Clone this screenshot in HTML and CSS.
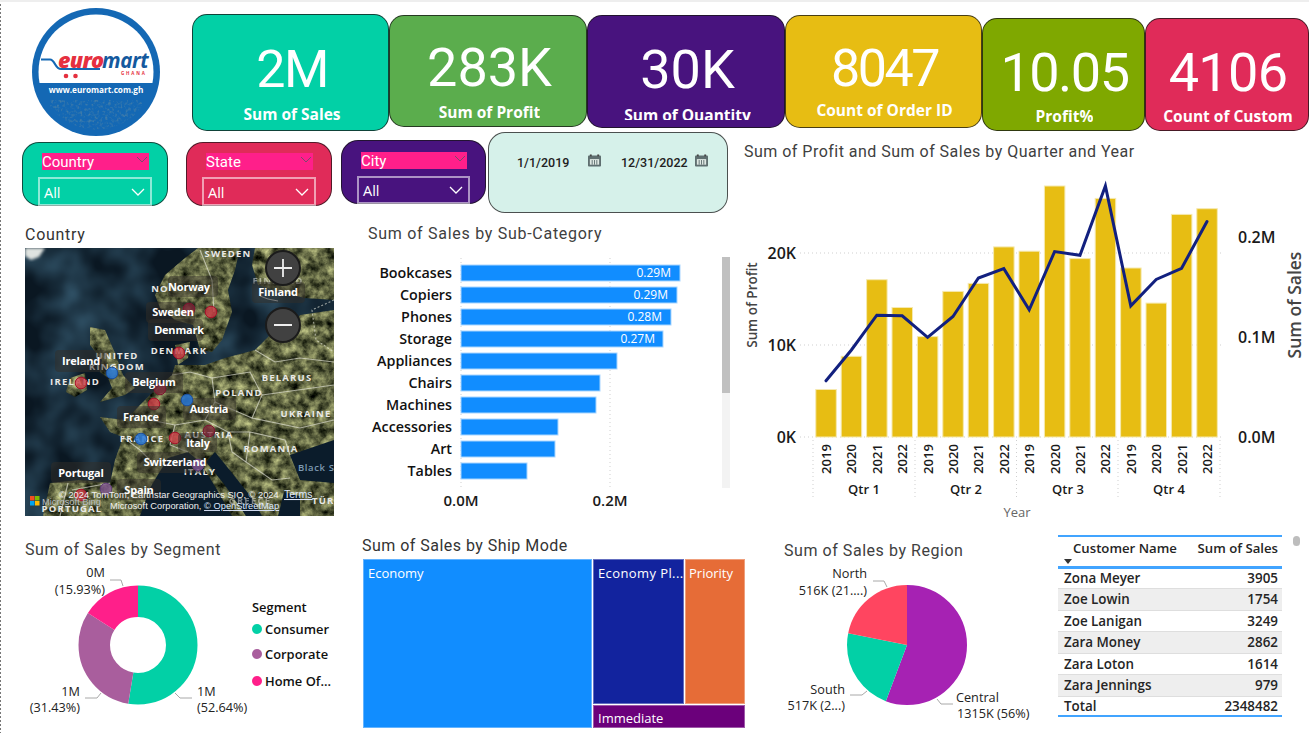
FILE: index.html
```html
<!DOCTYPE html>
<html lang="en">
<head>
<meta charset="utf-8">
<title>Euromart Sales Dashboard</title>
<link rel="stylesheet" href="styles.css">
</head>
<body>
<div class="page">

  <header class="top">
    <svg class="logo" viewBox="32 8 128 128" aria-label="Euromart logo">
      <defs>
        <clipPath id="logoClip"><circle cx="96" cy="72" r="57.5"/></clipPath>
        <filter id="logoGrain" x="0" y="0" width="100%" height="100%">
          <feTurbulence type="fractalNoise" baseFrequency="0.35" numOctaves="2" seed="4"/>
          <feColorMatrix values="0 0 0 0 0.05  0 0 0 0 0.2  0 0 0 0 0.4  0 0 0 3.2 -1.55"/>
        </filter>
      </defs>
      <circle cx="96" cy="72" r="64" fill="#1468B4"/>
      <g clip-path="url(#logoClip)">
        <rect x="32" y="8" width="128" height="75" fill="#fff"/>
        <rect x="50" y="100" width="92" height="36" filter="url(#logoGrain)"/>
      </g>
      <path d="M41 59.500 H50 C55 59.500 55 69 61 69 H100" fill="none" stroke="#1468B4" stroke-width="2.200"/>
      <circle cx="66" cy="76" r="2.300" fill="#E5303F"/>
      <circle cx="75.500" cy="76" r="2.300" fill="#E5303F"/>
      <text class="logo-euro" x="58" y="67.500">euro</text>
      <text class="logo-mart" x="102" y="67.500">mart</text>
      <text class="logo-ghana" x="121" y="74.500">GHANA</text>
      <text class="logo-url" x="96" y="93">www.euromart.com.gh</text>
    </svg>

    <div class="kpis">
      <div class="kpi kpi-sales"><div class="kpi-value">2M</div><div class="kpi-label">Sum of Sales</div></div>
      <div class="kpi kpi-profit"><div class="kpi-value">283K</div><div class="kpi-label">Sum of Profit</div></div>
      <div class="kpi kpi-qty"><div class="kpi-value">30K</div><div class="kpi-label">Sum of Quantity</div></div>
      <div class="kpi kpi-order"><div class="kpi-value">8047</div><div class="kpi-label">Count of Order ID</div></div>
      <div class="kpi kpi-pct"><div class="kpi-value">10.05</div><div class="kpi-label">Profit%</div></div>
      <div class="kpi kpi-cust"><div class="kpi-value">4106</div><div class="kpi-label">Count of Custom</div></div>
    </div>
  </header>

  <section class="mid">
    <div class="mid-left">
      <div class="filters">
        <div class="slicer slicer-country">
          <div class="slicer-head"><span>Country</span><svg class="chev-head" viewBox="0 0 12 7"><path d="M1 1l5 5 5-5"/></svg></div>
          <div class="slicer-box"><span>All</span><svg class="chev" viewBox="0 0 14 8"><path d="M1 1l6 6 6-6"/></svg></div>
        </div>
        <div class="slicer slicer-state">
          <div class="slicer-head"><span>State</span><svg class="chev-head" viewBox="0 0 12 7"><path d="M1 1l5 5 5-5"/></svg></div>
          <div class="slicer-box"><span>All</span><svg class="chev" viewBox="0 0 14 8"><path d="M1 1l6 6 6-6"/></svg></div>
        </div>
        <div class="slicer slicer-city">
          <div class="slicer-head"><span>City</span><svg class="chev-head" viewBox="0 0 12 7"><path d="M1 1l5 5 5-5"/></svg></div>
          <div class="slicer-box"><span>All</span><svg class="chev" viewBox="0 0 14 8"><path d="M1 1l6 6 6-6"/></svg></div>
        </div>
        <div class="dates">
          <div class="date date-a"><span>1/1/2019</span>
            <svg class="cal" viewBox="0 0 14 13"><rect y="1" width="14" height="12" rx="1" fill="#5f6f70"/><rect x="2" y="0" width="2" height="2" fill="#444"/><rect x="10" y="0" width="2" height="2" fill="#444"/><path d="M2 5h10v6H2z" fill="#dfe8e3"/><path d="M4.500 6v5M7 6v5M9.500 6v5" stroke="#5f6f70"/></svg>
          </div>
          <div class="date date-b"><span>12/31/2022</span>
            <svg class="cal" viewBox="0 0 14 13"><rect y="1" width="14" height="12" rx="1" fill="#5f6f70"/><rect x="2" y="0" width="2" height="2" fill="#444"/><rect x="10" y="0" width="2" height="2" fill="#444"/><path d="M2 5h10v6H2z" fill="#dfe8e3"/><path d="M4.500 6v5M7 6v5M9.500 6v5" stroke="#5f6f70"/></svg>
          </div>
        </div>
      </div>

      <div class="viz-row">
        <div class="map-panel">
          <h2 class="title title-map">Country</h2>
          <svg class="map" viewBox="25 248 309 268">
            <defs>
              <filter id="sat" x="0" y="0" width="100%" height="100%" color-interpolation-filters="sRGB">
                <feTurbulence type="fractalNoise" baseFrequency="0.11" numOctaves="4" seed="7" result="n"/>
                <feColorMatrix in="n" values="1.050 0 0 0 -0.150  1.050 0 0 0 -0.130  0.750 0 0 0 -0.120  0 0 0 0 1" result="c"/>
                <feComposite in="c" in2="SourceAlpha" operator="in"/>
              </filter>
              <filter id="seaNoise" x="0" y="0" width="100%" height="100%">
                <feTurbulence type="fractalNoise" baseFrequency="0.02" numOctaves="3" seed="3"/>
                <feColorMatrix values="0 0 0 0 0.05  0 0 0 0 0.14  0 0 0 0 0.22  0 0 0 1.4 -0.45"/>
              </filter>
              <filter id="soft"><feGaussianBlur stdDeviation="1.500"/></filter>
            </defs>
            <rect x="25" y="248" width="309" height="268" fill="#0a1722"/>
            <rect x="25" y="248" width="309" height="268" filter="url(#seaNoise)"/>
            <path d="M25 248h20l-6 9-8 3-6-4z" fill="#dfe3e0" filter="url(#soft)"/>
            <g filter="url(#sat)">
              <path d="M198 248H240L235 270 228 290 232 312 222 340 212 352 200 350 193 325 175 320 160 308 155 295 165 275 185 258Z"/>
              <path d="M175 345L190 342 188 358 178 365Z"/>
              <path d="M255 248H334V300L305 298 280 292 258 285 252 265Z"/>
              <path d="M90 327L105 330 115 353 123 375 135 388 125 395 100 402 112 388 108 378 100 372 102 360 90 345Z"/>
              <path d="M70 378L85 373 87 390 75 397 66 392Z"/>
              <path d="M334 310L300 315 290 330 270 335 255 350 225 358 205 365 190 365 175 365 172 375 157 388 140 405 125 420 100 417 110 432 123 437 115 460 110 483 80 480 50 483 43 516H334Z"/>
            </g>
            <g fill="#0b1c2b">
              <path d="M140 516L150 488 168 458 188 452 200 462 216 488 232 516Z"/>
              <path d="M215 452L228 468 252 498 262 516H246L224 484 206 462Z"/>
              <path d="M284 492L300 496 300 516H278Z"/>
              <path d="M290 455L334 440V483L300 480Z"/>
            </g>
            <g class="map-border">
              <path d="M200 250L212 280 214 312"/>
              <path d="M172 375L190 372 212 378 215 402 205 420 175 425 150 420"/>
              <path d="M212 378L250 372 262 395 252 418 215 402"/>
              <path d="M262 395L334 385"/>
              <path d="M252 418L300 428 334 420"/>
              <path d="M205 420L228 432 250 432 285 440 290 455"/>
              <path d="M250 432L246 462 272 480 290 478"/>
              <path d="M228 432L232 452 246 462"/>
              <path d="M175 425L170 445 188 452"/>
              <path d="M123 437L140 450 150 460"/>
              <path d="M68 483L60 516"/>
              <path d="M110 483L72 490"/>
              <path d="M334 300L312 310 316 340 334 352" stroke-dasharray="2 2"/>
              <path d="M255 350L275 362 300 358 334 362"/>
            </g>
            <path d="M260 296l8 3 10 2" stroke="#fff" fill="none" opacity=".7"/>

            <g class="map-base">
              <text x="228" y="257">SWEDEN</text>
              <text x="278" y="284" class="map-faint">FINLAND</text>
              <text x="160" y="292">NO</text>
              <text x="117" y="359">UNITED</text>
              <text x="117" y="370">KINGDOM</text>
              <text x="179" y="354">DENMARK</text>
              <text x="75" y="385">IRELAND</text>
              <text x="287" y="381">BELARUS</text>
              <text x="239" y="396">POLAND</text>
              <text x="306" y="417">UKRAINE</text>
              <text x="209" y="438">AUSTRIA</text>
              <text x="271" y="452">ROMANIA</text>
              <text x="142" y="442">FRANCE</text>
              <text x="200" y="475">ITALY</text>
              <text x="72" y="512">PORTUGAL</text>
              <text x="250" y="504" class="map-faint">GREECE</text>
              <text x="336" y="504">TÜRKIYE</text>
              <text x="298" y="471" class="map-sea">Black Sea</text>
            </g>

            <g class="bub-red">
              <circle cx="211" cy="312" r="5.800"/><circle cx="179" cy="353" r="5.800"/><circle cx="81" cy="383" r="5.800"/>
              <circle cx="154" cy="404" r="5.800"/><circle cx="175" cy="438" r="5.800"/><circle cx="81" cy="495" r="5.800"/>
            </g>
            <g class="map-chip">
              <rect x="168" y="276" width="50" height="21" rx="4"/><rect x="146" y="302" width="49" height="21" rx="4"/>
              <rect x="148" y="319" width="55" height="22" rx="4"/><rect x="55" y="350" width="52" height="22" rx="4"/>
              <rect x="125" y="372" width="58" height="21" rx="4"/><rect x="183" y="398" width="53" height="22" rx="4"/>
              <rect x="117" y="406" width="49" height="22" rx="4"/><rect x="178" y="433" width="39" height="19" rx="4"/>
              <rect x="137" y="452" width="68" height="21" rx="4"/><rect x="51" y="462" width="60" height="21" rx="4"/>
              <rect x="117" y="479" width="44" height="21" rx="4"/><rect x="252" y="282" width="53" height="21" rx="4"/>
            </g>
            <g class="bub-dark">
              <circle cx="189" cy="309" r="5.800"/><circle cx="160" cy="389" r="5.800"/><circle cx="209" cy="431" r="5.800"/>
            </g>
            <g class="bub-blue">
              <circle cx="112" cy="373" r="5.800"/><circle cx="187" cy="400" r="5.800"/><circle cx="141" cy="439" r="5.800"/>
            </g>
            <g class="bub-purple">
              <circle cx="198" cy="465" r="5.800"/><circle cx="106" cy="489" r="5.800"/>
            </g>
            <g class="map-name">
              <text x="189" y="291">Norway</text><text x="173" y="316">Sweden</text><text x="179" y="334">Denmark</text>
              <text x="81" y="365">Ireland</text><text x="154" y="386">Belgium</text><text x="209" y="413">Austria</text>
              <text x="141" y="421">France</text><text x="198" y="447">Italy</text><text x="175" y="466">Switzerland</text>
              <text x="81" y="477">Portugal</text><text x="139" y="494">Spain</text><text x="278" y="296">Finland</text>
            </g>

            <g class="zoom-btn">
              <circle cx="283" cy="268" r="17"/><circle cx="283" cy="325" r="17"/>
              <path d="M274 268h18M283 259v18M274 325h18"/>
            </g>

            <rect x="30" y="496" width="4.500" height="4.500" fill="#F25022"/><rect x="35" y="496" width="4.500" height="4.500" fill="#7FBA00"/>
            <rect x="30" y="501" width="4.500" height="4.500" fill="#00A4EF"/><rect x="35" y="501" width="4.500" height="4.500" fill="#FFB900"/>
            <text class="map-attr map-bing" x="42" y="505">Microsoft Bing</text>
            <text class="map-attr" x="59" y="498">© 2024 TomTom, Earthstar Geographics SIO, © 2024</text>
            <text class="map-attr map-link map-terms" x="284" y="498">Terms</text>
            <text class="map-attr" x="110" y="509">Microsoft Corporation, <tspan class="map-link">© OpenStreetMap</tspan></text>
          </svg>
        </div>

        <div class="bars-panel">
          <h2 class="title title-bars">Sum of Sales by Sub-Category</h2>
          <svg class="bars" viewBox="360 248 375 268">
            <path class="grid" d="M461 258V490M610 258V490"/>
            <g class="bar">
              <rect x="461" y="265" width="219" height="16"/><rect x="461" y="287" width="216" height="16"/>
              <rect x="461" y="309" width="210" height="16"/><rect x="461" y="331" width="202" height="16"/>
              <rect x="461" y="353" width="156" height="16"/><rect x="461" y="375" width="139" height="16"/>
              <rect x="461" y="397" width="135" height="16"/><rect x="461" y="419" width="97" height="16"/>
              <rect x="461" y="441" width="94" height="16"/><rect x="461" y="463" width="66" height="16"/>
            </g>
            <g class="bar-name">
              <text x="452" y="278">Bookcases</text><text x="452" y="300">Copiers</text><text x="452" y="322">Phones</text>
              <text x="452" y="344">Storage</text><text x="452" y="366">Appliances</text><text x="452" y="388">Chairs</text>
              <text x="452" y="410">Machines</text><text x="452" y="432">Accessories</text><text x="452" y="454">Art</text>
              <text x="452" y="476">Tables</text>
            </g>
            <g class="bar-val">
              <text x="671" y="277">0.29M</text><text x="668" y="299">0.29M</text><text x="662" y="321">0.28M</text><text x="655" y="343">0.27M</text>
            </g>
            <g class="bar-axis"><text x="461" y="506">0.0M</text><text x="610" y="506">0.2M</text></g>
            <rect x="722" y="257" width="8" height="136" fill="#c0c0c0"/>
            <rect x="722" y="393" width="8" height="95" fill="#f3f3f3"/>
          </svg>
        </div>
      </div>
    </div>

    <div class="combo-panel">
      <h2 class="title title-combo">Sum of Profit and Sum of Sales by Quarter and Year</h2>
      <svg class="combo" viewBox="744 168 565 364">
        <path class="grid" d="M800 253H1222M800 345H1222M800 437H1222M813 440V500M915 440V500M1016.500 440V500M1118 440V500M1220 440V500"/>
        <g class="cbar">
          <rect x="815.800" y="389.500" width="20.500" height="47.500"/><rect x="841.200" y="356.300" width="20.500" height="80.700"/>
          <rect x="866.600" y="279.700" width="20.500" height="157.300"/><rect x="892" y="307.500" width="20.500" height="129.500"/>
          <rect x="917.400" y="336.600" width="20.500" height="100.400"/><rect x="942.800" y="291.400" width="20.500" height="145.600"/>
          <rect x="968.200" y="283.400" width="20.500" height="153.600"/><rect x="993.600" y="246.900" width="20.500" height="190.100"/>
          <rect x="1019" y="251.200" width="20.500" height="185.800"/><rect x="1044.400" y="186" width="20.500" height="251"/>
          <rect x="1069.800" y="258.600" width="20.500" height="178.400"/><rect x="1095.200" y="198.400" width="20.500" height="238.600"/>
          <rect x="1120.600" y="268" width="20.500" height="169"/><rect x="1146" y="303.100" width="20.500" height="133.900"/>
          <rect x="1171.400" y="214.400" width="20.500" height="222.600"/><rect x="1196.800" y="208.700" width="20.500" height="228.300"/>
        </g>
        <polyline class="cline" points="826,380.800 851.400,350 876.800,315.200 902.200,315.800 927.600,337.300 953,316.500 978.400,278 1003.800,268.600 1029.200,309.800 1054.600,251.600 1080,255.300 1105.400,186 1130.800,305.800 1156.200,279.400 1181.600,268.300 1207,221.500"/>
        <g class="ax-bold ax-end"><text x="796" y="259">20K</text><text x="796" y="351">10K</text><text x="796" y="443">0K</text></g>
        <g class="ax-bold"><text x="1238" y="243">0.2M</text><text x="1238" y="343">0.1M</text><text x="1238" y="443">0.0M</text></g>
        <text class="ax-title-left" transform="rotate(-90 757 305)" x="757" y="305">Sum of Profit</text>
        <text class="ax-title-right" transform="rotate(-90 1301 305)" x="1301" y="305">Sum of Sales</text>
        <g class="year">
          <text transform="rotate(-90 831 459)" x="831" y="459">2019</text><text transform="rotate(-90 856.400 459)" x="856.400" y="459">2020</text>
          <text transform="rotate(-90 881.800 459)" x="881.800" y="459">2021</text><text transform="rotate(-90 907.200 459)" x="907.200" y="459">2022</text>
          <text transform="rotate(-90 932.600 459)" x="932.600" y="459">2019</text><text transform="rotate(-90 958 459)" x="958" y="459">2020</text>
          <text transform="rotate(-90 983.400 459)" x="983.400" y="459">2021</text><text transform="rotate(-90 1008.800 459)" x="1008.800" y="459">2022</text>
          <text transform="rotate(-90 1034.200 459)" x="1034.200" y="459">2019</text><text transform="rotate(-90 1059.600 459)" x="1059.600" y="459">2020</text>
          <text transform="rotate(-90 1085 459)" x="1085" y="459">2021</text><text transform="rotate(-90 1110.400 459)" x="1110.400" y="459">2022</text>
          <text transform="rotate(-90 1135.800 459)" x="1135.800" y="459">2019</text><text transform="rotate(-90 1161.200 459)" x="1161.200" y="459">2020</text>
          <text transform="rotate(-90 1186.600 459)" x="1186.600" y="459">2021</text><text transform="rotate(-90 1212 459)" x="1212" y="459">2022</text>
        </g>
        <g class="qtr"><text x="864" y="494">Qtr 1</text><text x="966" y="494">Qtr 2</text><text x="1068" y="494">Qtr 3</text><text x="1169" y="494">Qtr 4</text></g>
        <text class="ax-year" x="1017" y="517">Year</text>
      </svg>
    </div>
  </section>

  <section class="bottom">
    <div class="seg-panel">
      <h2 class="title title-seg">Sum of Sales by Segment</h2>
      <svg class="seg" viewBox="20 560 325 170">
        <g class="donut" transform="rotate(-90 138 645)">
          <circle class="d-teal" cx="138" cy="645" r="43.750" pathLength="100" stroke-dasharray="52.640 100"/>
          <circle class="d-purple" cx="138" cy="645" r="43.750" pathLength="100" stroke-dasharray="31.430 100" stroke-dashoffset="-52.640"/>
          <circle class="d-pink" cx="138" cy="645" r="43.750" pathLength="100" stroke-dasharray="15.930 100" stroke-dashoffset="-84.070"/>
        </g>
        <path class="leader" d="M110 580H121L123 586M85 698H97L101 693M175 693L180 698H192"/>
        <g class="pie-label">
          <text class="t-end" x="105" y="577">0M</text><text class="t-end" x="105" y="594">(15.93%)</text>
          <text class="t-end" x="80" y="696">1M</text><text class="t-end" x="80" y="712">(31.43%)</text>
          <text x="197" y="696">1M</text><text x="197" y="712">(52.64%)</text>
        </g>
        <g class="legend">
          <text class="legend-title" x="252" y="612">Segment</text>
          <circle cx="257" cy="629" r="5" fill="#02D0A6"/><text x="265" y="634">Consumer</text>
          <circle cx="257" cy="654" r="5" fill="#A95E9D"/><text x="265" y="659">Corporate</text>
          <circle cx="257" cy="681" r="5" fill="#FF1F8A"/><text x="265" y="686">Home Of...</text>
        </g>
      </svg>
    </div>

    <div class="ship-panel">
      <h2 class="title title-ship">Sum of Sales by Ship Mode</h2>
      <div class="treemap">
        <div class="tm tm-eco">Economy</div>
        <div class="tm-side">
          <div class="tm-top">
            <div class="tm tm-plus">Economy Pl...</div>
            <div class="tm tm-pri">Priority</div>
          </div>
          <div class="tm tm-imm">Immediate</div>
        </div>
      </div>
    </div>

    <div class="reg-panel">
      <h2 class="title title-reg">Sum of Sales by Region</h2>
      <svg class="reg" viewBox="780 560 255 170">
        <g class="pie" transform="rotate(-90 907 645)">
          <circle class="p-central" cx="907" cy="645" r="30" pathLength="100" stroke-dasharray="55.750 100"/>
          <circle class="p-south" cx="907" cy="645" r="30" pathLength="100" stroke-dasharray="22.420 100" stroke-dashoffset="-55.750"/>
          <circle class="p-north" cx="907" cy="645" r="30" pathLength="100" stroke-dasharray="21.830 100" stroke-dashoffset="-78.170"/>
        </g>
        <path class="leader" d="M873 581H884L887 587M850 695H862L867 691M937 699L941 704H953"/>
        <g class="pie-label">
          <text class="t-end" x="867" y="578">North</text><text class="t-end" x="867" y="595">516K (21....)</text>
          <text class="t-end" x="845" y="694">South</text><text class="t-end" x="845" y="710">517K (2...)</text>
          <text x="956" y="702">Central</text><text x="957" y="718">1315K (56%)</text>
        </g>
      </svg>
    </div>

    <div class="table-panel">
      <table class="tbl">
        <thead>
          <tr><th class="th-name">Customer Name<span class="sort"></span></th><th class="num">Sum of Sales</th></tr>
        </thead>
        <tbody>
          <tr><td>Zona Meyer</td><td class="num">3905</td></tr>
          <tr class="alt"><td>Zoe Lowin</td><td class="num">1754</td></tr>
          <tr><td>Zoe Lanigan</td><td class="num">3249</td></tr>
          <tr class="alt"><td>Zara Money</td><td class="num">2862</td></tr>
          <tr><td>Zara Loton</td><td class="num">1614</td></tr>
          <tr class="alt"><td>Zara Jennings</td><td class="num">979</td></tr>
        </tbody>
        <tfoot>
          <tr><td>Total</td><td class="num">2348482</td></tr>
        </tfoot>
      </table>
      <div class="scroll-dot"></div>
    </div>
  </section>
</div>
</body>
</html>
```
FILE: styles.css
```css
* { box-sizing: border-box; }
html, body { margin: 0; padding: 0; background: #fff; }
svg { display: block; }
.page {
  width: 1309px; height: 733px; overflow: hidden;
  font-family: "Open Sans", "Noto Sans", sans-serif;
  background:
    linear-gradient(#eeeeee, #eeeeee) top left / 100% 2px no-repeat,
    repeating-linear-gradient(to bottom, #777 0 2px, transparent 2px 4px) top left / 1px 100% no-repeat,
    #fff;
}

/* top band */
.top { display: flex; height: 132px; padding-left: 32px; }
.logo { width: 128px; height: 128px; margin-top: 8px; flex: none; }
.logo-euro { font: italic 800 21.500px "Open Sans", sans-serif; fill: #E5303F; letter-spacing: -.7px; }
.logo-mart { font: italic 700 20.500px "Open Sans", sans-serif; fill: #14599E; letter-spacing: -.4px; }
.logo-ghana { font: 700 4.500px "Open Sans", sans-serif; fill: #E5303F; letter-spacing: 1.800px; }
.logo-url { font: 700 8.200px "Open Sans", sans-serif; fill: #fff; text-anchor: middle; }

.kpis { display: flex; margin-left: 32px; align-items: flex-start; }
.kpi {
  display: flex; flex-direction: column; align-items: center; flex: none;
  border: 1px solid rgba(20, 20, 20, .75); border-radius: 15px; color: #fff;
  margin-top: var(--top); width: var(--w); height: var(--h); background: var(--bg);
  padding-left: var(--pl, 3px);
}
.kpi-value {
  font: 400 var(--fs, 54px)/60px Roboto, sans-serif; height: 60px; margin-top: var(--vt);
  letter-spacing: var(--ls, 0);
  white-space: nowrap;
}
.kpi-label {
  font: 700 15.500px/20px "Open Sans", sans-serif; margin-top: var(--lt); height: var(--lh, 20px);
  overflow: hidden; white-space: nowrap;
}
.kpi-sales  { --top: 14px; --w: 197px; --h: 117px; --bg: #02D0A6; --vt: 25px; --lt: 4px; --fs: 52px; --ls: -1.500px; }
.kpi-profit { --top: 15px; --w: 198px; --h: 112px; --bg: #5BAD4D; --vt: 22px; --lt: 4px; --lh: 16px; }
.kpi-qty    { --top: 15px; --w: 198px; --h: 113px; --bg: #48137E; --vt: 24px; --lt: 5px; --lh: 15px; --fs: 54px; }
.kpi-order  { --top: 15px; --w: 197px; --h: 113px; --bg: #E7BD13; --vt: 23px; --lt: 1px; --fs: 52px; --ls: -2.500px; --pl: 2px; }
.kpi-pct    { --top: 18px; --w: 163px; --h: 113px; --bg: #7FA800; --vt: 24px; --lt: 3px; --fs: 54px; --ls: -1.500px; --pl: 2px; }
.kpi-cust   { --top: 18px; --w: 164px; --h: 113px; --bg: #E02B59; --vt: 24px; --lt: 3px; --ls: -.700px; --pl: 2px; }

/* middle */
.mid { display: flex; height: 400px; }
.mid-left { width: 744px; flex: none; }
.filters { display: flex; height: 91px; padding-left: 22px; align-items: flex-start; }
.slicer {
  width: 146px; height: 64px; margin-top: 10px; margin-right: 18px; flex: none;
  border: 1px solid rgba(20, 20, 20, .7); border-radius: 17px;
  padding: 10px 15px 0 15px; color: #fff;
  display: flex; flex-direction: column; align-items: stretch;
}
.slicer-country { background: #02D0A6; }
.slicer-state { background: #E02B59; margin-right: 9px; }
.slicer-city { background: #48137E; margin-top: 8px; margin-right: 2px; width: 145px; padding-top: 11px; }
.slicer-head {
  height: 17px; margin: 0 3px 0 4px; background: #FF1F8A; display: flex;
  justify-content: space-between; align-items: center;
  font: 400 15px/19px Roboto, sans-serif; padding-right: 1px;
}
.slicer-head span { padding-top: 2px; }
.chev-head { width: 12px; height: 7px; fill: none; stroke: #7a4a6c; stroke-width: 1; margin-top: -4px; }
.slicer-box {
  height: 29px; margin-top: 7px; border: 2px solid rgba(255, 255, 255, .55);
  display: flex; justify-content: space-between; align-items: center;
  padding: 0 5px 0 4px; font: 400 14.500px/29px "Open Sans", sans-serif;
}
.slicer-box span { padding-top: 1px; }
.slicer-city .slicer-box { height: 28px; }
.chev { width: 14px; height: 8px; fill: none; stroke: #fff; stroke-width: 1.300; }

.dates {
  width: 240px; height: 81px; flex: none; background: #D6F1EA;
  border: 1px solid rgba(40, 40, 40, .8); border-radius: 17px;
  padding: 16px 0 0 28px; display: flex;
}
.date { display: flex; align-items: flex-start; height: 28px; font: 500 12.500px/28px Roboto, sans-serif; color: #222; }
.date-a { width: 104px; justify-content: space-between; padding-right: 20px; }
.date-b { width: 87px; justify-content: space-between; }
.cal { width: 13px; height: 13px; margin-top: 5px; flex: none; }

.title { margin: 0; font: 400 16px/20px Roboto, sans-serif; letter-spacing: .72px; color: #404040; white-space: nowrap; }
.viz-row { display: flex; }
.map-panel { margin-left: 25px; width: 309px; flex: none; }
.title-map { height: 25px; padding-top: 2px; color: #333; }
.map { width: 309px; height: 268px; }
.map-border path { fill: none; stroke: rgba(235, 235, 225, .62); stroke-width: 1.100; }
.map-base text { font: 700 9.500px "Open Sans", sans-serif; fill: #e9e9e6; letter-spacing: 1.200px; text-anchor: middle; }
.map-base .map-faint { opacity: .5; }
.map-base .map-sea { fill: #7d9ab2; font-weight: 600; letter-spacing: .6px; text-anchor: start; }
.map-chip rect { fill: rgba(50, 45, 40, .5); }
.map-name text { font: 700 11px "Open Sans", sans-serif; fill: #fff; text-anchor: middle; letter-spacing: -.2px; }
.bub-red circle { fill: rgba(205, 60, 70, .8); stroke: #a8122a; stroke-width: 1; }
.bub-dark circle { fill: rgba(135, 40, 60, .7); stroke: #7d1530; stroke-width: 1; }
.bub-blue circle { fill: rgba(40, 120, 215, .85); stroke: #1c4f9f; stroke-width: 1; }
.bub-purple circle { fill: rgba(135, 90, 155, .75); stroke: #5f3d77; stroke-width: 1; }
.zoom-btn circle { fill: #414141; stroke: #1b1b1b; stroke-width: 2; }
.zoom-btn path { stroke: #eee; stroke-width: 1.800; fill: none; }
.map-attr { font: 400 9.300px "Liberation Sans", sans-serif; fill: #f0f0f0; }
.map-bing { fill: #b8bcc0; }
.map-link { fill: #dfe8ff; text-decoration: underline; }
.map-terms { font-size: 10.500px; }

.bars-panel { margin-left: 26px; width: 375px; flex: none; }
.title-bars { height: 25px; padding: 1px 0 0 8px; }
.bars { width: 375px; height: 268px; }
.grid { stroke: #cfcfcf; stroke-width: 1; stroke-dasharray: 1 3; fill: none; }
.bar rect { fill: #118DFF; stroke: #a9d6ff; stroke-width: 1; }
.bar-name text { font: 600 14.300px "Open Sans", sans-serif; fill: #111; text-anchor: end; }
.bar-val text { font: 400 12px "Open Sans", sans-serif; fill: #fff; text-anchor: end; }
.bar-axis text { font: 600 15px "Open Sans", sans-serif; fill: #1a1a1a; text-anchor: middle; }

.combo-panel { width: 565px; flex: none; }
.title-combo { height: 36px; padding-top: 10px; letter-spacing: .48px; }
.combo { width: 565px; height: 364px; }
.cbar rect { fill: #E7BD13; stroke: #f6e9ae; stroke-width: 1; }
.cline { fill: none; stroke: #12207F; stroke-width: 3; stroke-linejoin: miter; stroke-linecap: round; }
.ax-bold text { font: 600 16px "Open Sans", sans-serif; fill: #1a1a1a; }
.ax-end text { text-anchor: end; }
.ax-title-left { font: 600 13.500px "Open Sans", sans-serif; fill: #444; text-anchor: middle; }
.ax-title-right { font: 600 17.500px "Open Sans", sans-serif; fill: #444; text-anchor: middle; }
.year text { font: 600 13px "Open Sans", sans-serif; fill: #1a1a1a; text-anchor: middle; }
.qtr text { font: 600 13px "Open Sans", sans-serif; fill: #1a1a1a; text-anchor: middle; }
.ax-year { font: 400 13px "Open Sans", sans-serif; fill: #666; text-anchor: middle; }

/* bottom */
.bottom { display: flex; height: 201px; }
.seg-panel { width: 345px; flex: none; padding-left: 20px; }
.title-seg { height: 28px; padding: 8px 0 0 5px; letter-spacing: .62px; }
.seg { width: 325px; height: 170px; }
.donut circle, .pie circle { fill: none; }
.donut circle { stroke-width: 31.500; }
.pie circle { stroke-width: 60; }
.d-teal { stroke: #02D0A6; } .d-purple { stroke: #A95E9D; } .d-pink { stroke: #FF1F8A; }
.p-central { stroke: #A622B3; } .p-south { stroke: #02D0A6; } .p-north { stroke: #FF4560; }
.leader { fill: none; stroke: #a8a8a8; stroke-width: 1; }
.pie-label text { font: 500 12.700px "Open Sans", sans-serif; fill: #222; }
.pie-label .t-end { text-anchor: end; }
.legend text { font: 600 12.900px "Open Sans", sans-serif; fill: #111; }

.ship-panel { width: 435px; flex: none; padding-left: 18px; padding-top: 4px; }
.title-ship { height: 23px; margin-left: -1px; color: #333; letter-spacing: .47px; }
.treemap { width: 382px; height: 169px; display: flex; gap: 1px; color: #fff; font: 400 13px/18px "Open Sans", sans-serif; }
.tm { padding: 4px 4px; overflow: hidden; white-space: nowrap; border: 1px solid rgba(255, 255, 255, .35); }
.tm-eco { width: 229px; background: #118DFF; }
.tm-side { flex: 1; display: flex; flex-direction: column; gap: 1px; }
.tm-top { flex: 1; display: flex; gap: 1px; }
.tm-plus { width: 91px; background: #12239E; letter-spacing: .4px; }
.tm-pri { flex: 1; background: #E66C37; padding-left: 3px; }
.tm-imm { height: 23px; padding: 3px 4px 0; background: #6B007B; }

.reg-panel { width: 258px; flex: none; padding-top: 9px; }
.title-reg { height: 19px; padding-left: 4px; letter-spacing: .55px; }
.reg { width: 255px; height: 170px; }

.table-panel { flex: none; margin-left: 20px; padding-top: 3px; display: flex; }
.tbl { width: 224px; height: 182px; border-collapse: collapse; table-layout: fixed; font: 600 13.400px/16px "Open Sans", sans-serif; color: #252525; }
.tbl th { font-weight: 600; height: 31px; text-align: left; vertical-align: top; padding: 3px 0 0 4px; border-top: 2px solid #41A4FF; border-bottom: 3px solid #41A4FF; position: relative; font-size: 13.200px; white-space: nowrap; }
.tbl th.th-name { width: 120px; padding-left: 15px; }
.tbl th.num { padding-right: 4px; }
.tbl td { height: 21px; padding: 0 4px 0 6px; border-bottom: 1px solid #dedede; white-space: nowrap; }
.tbl .num { text-align: right; }
.tbl .alt td { background: #eeeeee; }
.tbl tfoot td { border-top: 0; border-bottom: 2px solid #41A4FF; height: 20px; }
.sort { position: absolute; left: 6px; top: 22px; width: 0; height: 0; border-left: 4.500px solid transparent; border-right: 4.500px solid transparent; border-top: 5px solid #333; }
.scroll-dot { width: 7px; height: 10px; border-radius: 4px; background: #bdbdbd; margin: 1px 0 0 11px; }
```
